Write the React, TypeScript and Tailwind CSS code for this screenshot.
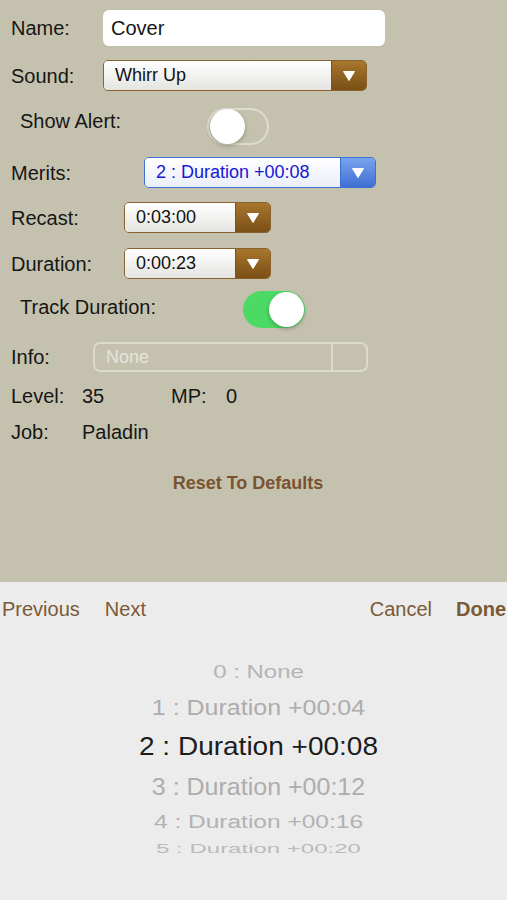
import React from "react";

function Arrow() {
  return (
    <svg width="14" height="12" viewBox="0 0 14 12">
      <path d="M1.5 1.5 H12.5 L7 10.5 Z" fill="#ffffff" stroke="#ffffff" strokeLinejoin="round" />
    </svg>
  );
}

function Select({
  value,
  width,
  blue,
}: {
  value: string;
  width: string;
  blue?: boolean;
}) {
  if (blue) {
    return (
      <div
        className={`${width} h-[31px] flex rounded-[5px] border border-[#3d6fd6] overflow-hidden`}
      >
        <div className="flex-1 flex items-center pl-[11px] bg-gradient-to-b from-white to-[#e9eef8] text-[18px] text-[#1717d6]">
          {value}
        </div>
        <div className="w-[35px] flex items-center justify-center border-l border-[#3d6fd6] bg-gradient-to-b from-[#7aa3ec] to-[#3f6fd3]">
          <Arrow />
        </div>
      </div>
    );
  }
  return (
    <div
      className={`${width} h-[31px] flex rounded-[5px] border border-[#8a6230] overflow-hidden`}
    >
      <div className="flex-1 flex items-center pl-[11px] bg-gradient-to-b from-white to-[#e4e4e2] text-[18px] text-[#111]">
        {value}
      </div>
      <div className="w-[35px] flex items-center justify-center border-l border-[#7a531f] bg-gradient-to-b from-[#a8772e] to-[#7b4f15]">
        <Arrow />
      </div>
    </div>
  );
}

function Toggle({ on }: { on?: boolean }) {
  return (
    <div
      className={`w-[62px] h-[37px] rounded-full flex items-center p-[1px] ${
        on
          ? "bg-[#4cd964] justify-end"
          : "border-2 border-[#dedccf] justify-start"
      }`}
    >
      <div className="w-[35px] h-[35px] rounded-full bg-white shadow-[0_2px_4px_rgba(0,0,0,0.25)]" />
    </div>
  );
}

export default function App() {
  return (
    <main className="w-[507px] h-[900px] overflow-hidden font-['Liberation_Sans',Arial,sans-serif] text-[#161616]">
      <div className="h-[582px] bg-[#c4c2ae] pt-[10px] pl-[11px]">
        <div className="flex items-center h-[36px]">
          <span className="w-[92px] text-[20px]">Name:</span>
          <div className="w-[282px] h-[36px] bg-white rounded-[6px] flex items-center pl-[8px] text-[20px]">
            Cover
          </div>
        </div>

        <div className="flex items-center h-[31px] mt-[14px]">
          <span className="w-[92px] text-[20px]">Sound:</span>
          <Select value="Whirr Up" width="w-[264px]" />
        </div>

        <div className="flex items-center h-[38px] mt-[16px]">
          <span className="w-[196px] pl-[9px] text-[20px] mb-[10px]">
            Show Alert:
          </span>
          <Toggle />
        </div>

        <div className="flex items-center h-[31px] mt-[12px]">
          <span className="w-[133px] text-[20px]">Merits:</span>
          <Select value="2 : Duration +00:08" width="w-[232px]" blue />
        </div>

        <div className="flex items-center h-[31px] mt-[14px]">
          <span className="w-[113px] text-[20px]">Recast:</span>
          <Select value="0:03:00" width="w-[147px]" />
        </div>

        <div className="flex items-center h-[31px] mt-[15px]">
          <span className="w-[113px] text-[20px]">Duration:</span>
          <Select value="0:00:23" width="w-[147px]" />
        </div>

        <div className="flex items-center h-[37px] mt-[12px]">
          <span className="w-[232px] pl-[9px] text-[20px] mb-[5px]">
            Track Duration:
          </span>
          <Toggle on />
        </div>

        <div className="flex items-center h-[30px] mt-[14px]">
          <span className="w-[82px] text-[20px]">Info:</span>
          <div className="w-[275px] h-[30px] rounded-[7px] border-2 border-[#dcdacb] flex">
            <div className="flex-1 flex items-center pl-[11px] text-[18px] text-[#e6e4d8]">
              None
            </div>
            <div className="w-[35px] border-l-2 border-[#dcdacb]" />
          </div>
        </div>

        <div className="flex items-center h-[24px] mt-[12px] text-[20px]">
          <span className="w-[71px]">Level:</span>
          <span className="w-[89px]">35</span>
          <span className="w-[55px]">MP:</span>
          <span>0</span>
        </div>

        <div className="flex items-center h-[24px] mt-[12px] text-[20px]">
          <span className="w-[71px]">Job:</span>
          <span>Paladin</span>
        </div>

        <div className="flex justify-center h-[24px] mt-[27px] pr-[22px] items-center">
          <span className="text-[18px] font-bold text-[#7a5331]">
            Reset To Defaults
          </span>
        </div>
      </div>

      <div className="h-[318px] bg-[#ececec]">
        <div className="h-[54px] flex items-center text-[20px] text-[#7b5a37]">
          <span className="ml-[2px]">Previous</span>
          <span className="ml-[25px]">Next</span>
          <span className="ml-auto">Cancel</span>
          <span className="ml-[24px] mr-[1px] font-bold">Done</span>
        </div>

        <div className="flex flex-col items-center pl-[10px]">
          <div className="h-[26px] mt-[23px] flex items-center text-[24px] text-[#b4b4b4] scale-y-[0.77]">
            0 : None
          </div>
          <div className="h-[34px] mt-[6px] flex items-center text-[25px] text-[#adadad] scale-y-[0.88]">
            1 : Duration +00:04
          </div>
          <div className="h-[40px] mt-[2px] flex items-center text-[28px] text-[#1c1c1c] scale-y-[0.92]">
            2 : Duration +00:08
          </div>
          <div className="h-[36px] mt-[2px] flex items-center text-[25px] text-[#adadad] scale-y-[0.96]">
            3 : Duration +00:12
          </div>
          <div className="h-[30px] mt-[2px] flex items-center text-[24.5px] text-[#b2b2b2] scale-y-[0.76]">
            4 : Duration +00:16
          </div>
          <div className="h-[20px] mt-[2px] flex items-center text-[24px] text-[#bababa] scale-y-[0.55]">
            5 : Duration +00:20
          </div>
        </div>
      </div>
    </main>
  );
}
